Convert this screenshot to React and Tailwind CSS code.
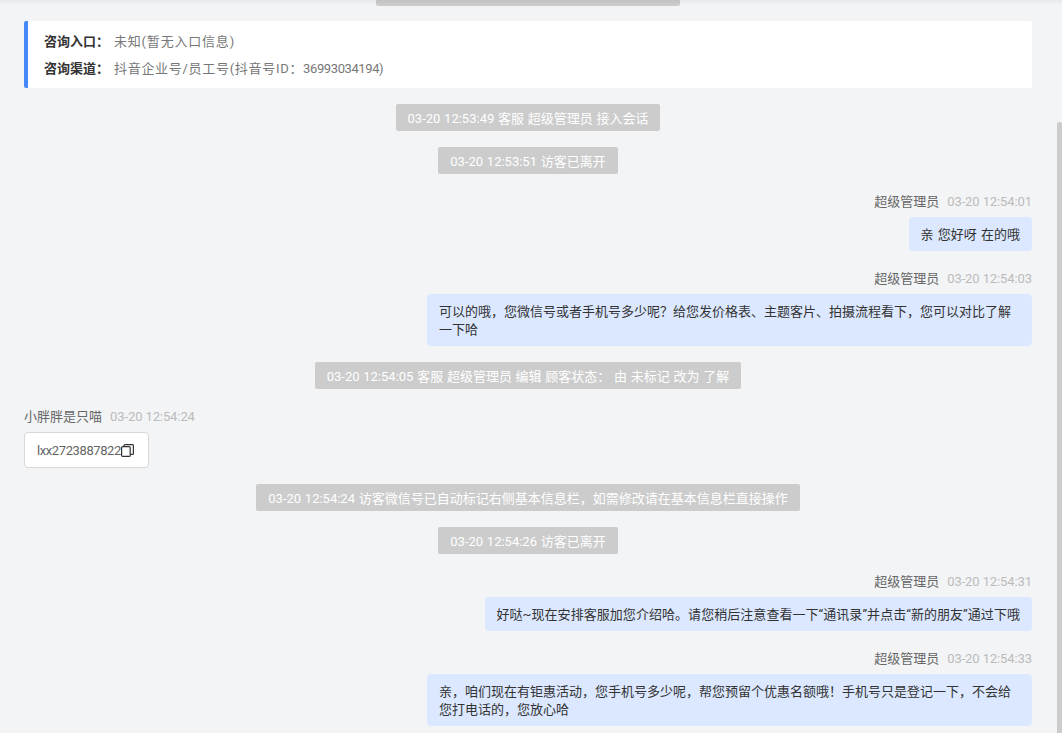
const fontStack = 'Roboto, "Noto Sans CJK SC", sans-serif';

const SystemTip = ({ text }) => (
  <div className="mb-4 flex justify-center">
    <div className="rounded-[2px] bg-[#cccccc] px-3 pt-[5px] pb-[3px] text-[13px] leading-[19px] text-white [word-spacing:0.5px]">{text}</div>
  </div>
);

const Meta = ({ name, time, right }) => (
  <div className={`flex h-[22px] items-center gap-2 pt-[2px] text-[13px] ${right ? 'justify-end' : ''}`}>
    <span className="text-[#666666]">{name}</span>
    <span className="tracking-[-0.1px] text-[#bbbbbb]">{time}</span>
  </div>
);

const AgentMessage = ({ time, text, className = '' }) => (
  <div className="mb-4">
    <Meta name="超级管理员" time={time} right />
    <div className="mt-[5px] flex justify-end">
      <div className={`max-w-[605px] rounded bg-[#dbe8ff] px-3 pt-[9px] pb-[7px] text-[13px] leading-[18px] text-[#333333] [word-spacing:1px] ${className}`}>{text}</div>
    </div>
  </div>
);

const CopyIcon = () => (
  <svg width="13" height="13" viewBox="0 0 13 13" fill="none" stroke="#333333" strokeWidth="1.2" className="shrink-0">
    <rect x="0.6" y="2.6" width="8.6" height="9.8" rx="1" />
    <path d="M3 2.6V1.6a1 1 0 0 1 1-1h7.4a1 1 0 0 1 1 1v7.8a1 1 0 0 1-1 1H9.2" />
  </svg>
);

const App = () => {
  return (
    <div className="relative h-[733px] overflow-hidden bg-[#f3f4f6]" style={{ fontFamily: fontStack }}>
      {/* 顶部阴影 */}
      <div className="absolute inset-x-0 top-0 h-[5px] bg-gradient-to-b from-black/5 to-transparent"></div>
      {/* 滚动条 */}
      <div className="absolute right-0 top-[122px] bottom-0 w-[5px] rounded-t-[2px] bg-[#cccccc]"></div>

      <div className="pl-6 pr-[30px]">
        <div className="-mt-[21px] mb-[15px] flex justify-center">
          <div className="h-[27px] w-[304px] rounded-[2px] bg-[#cccccc]"></div>
        </div>

        <div className="mb-4 rounded-[2px] border-l-4 border-[#4688fa] bg-white px-4 pt-[7px] pb-[6px] text-[13px] leading-[27px]">
          <div className="flex">
            <span className="mr-[5px] font-bold text-[#333333]">咨询入口：</span>
            <span className="tracking-[0.8px] text-[#777777]">未知(暂无入口信息)</span>
          </div>
          <div className="flex">
            <span className="mr-[5px] font-bold text-[#333333]">咨询渠道：</span>
            <span className="tracking-[0.7px] text-[#777777]">抖音企业号/员工号(抖音号ID：</span>
            <span className="tracking-[-0.4px] text-[#777777]">36993034194)</span>
          </div>
        </div>

        <SystemTip text="03-20 12:53:49 客服 超级管理员 接入会话" />
        <SystemTip text="03-20 12:53:51 访客已离开" />

        <AgentMessage time="03-20 12:54:01" text="亲 您好呀 在的哦" />
        <AgentMessage
          time="03-20 12:54:03"
          text="可以的哦，您微信号或者手机号多少呢？给您发价格表、主题客片、拍摄流程看下，您可以对比了解一下哈"
        />

        <SystemTip text="03-20 12:54:05 客服 超级管理员 编辑 顾客状态： 由 未标记 改为 了解" />

        <div className="mb-4">
          <Meta name="小胖胖是只喵" time="03-20 12:54:24" />
          <div className="mt-[5px] flex">
            <div className="flex h-9 items-center rounded border border-[#d9d9d9] bg-white pl-3 pr-[14px] text-[13px] text-[#666666]">
              <span className="pt-[1px] tracking-[-0.4px]">lxx2723887822</span>
              <CopyIcon />
            </div>
          </div>
        </div>

        <SystemTip text="03-20 12:54:24 访客微信号已自动标记右侧基本信息栏，如需修改请在基本信息栏直接操作" />
        <SystemTip text="03-20 12:54:26 访客已离开" />

        <AgentMessage
          time="03-20 12:54:31"
          className="tracking-[0.05px]"
          text="好哒~现在安排客服加您介绍哈。请您稍后注意查看一下“通讯录”并点击“新的朋友”通过下哦"
        />
        <AgentMessage
          time="03-20 12:54:33"
          text="亲，咱们现在有钜惠活动，您手机号多少呢，帮您预留个优惠名额哦！手机号只是登记一下，不会给您打电话的，您放心哈"
        />
      </div>
    </div>
  );
};

export default App;
